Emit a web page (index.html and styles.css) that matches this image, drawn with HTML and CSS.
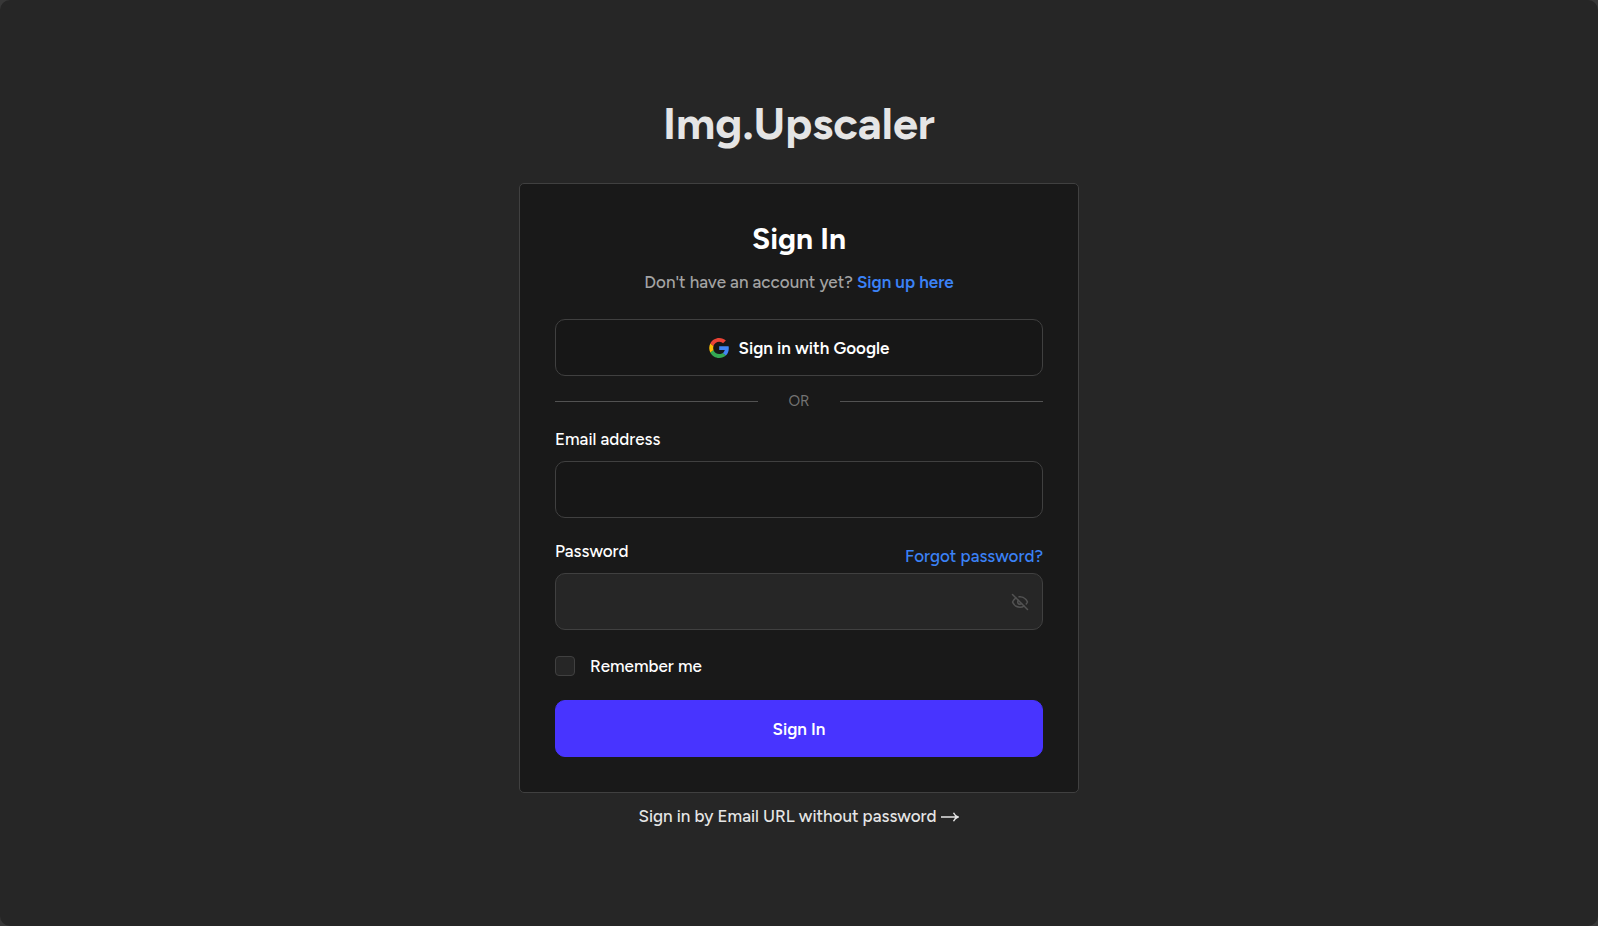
FILE: index.html
```html
<!DOCTYPE html>
<html lang="en">
<head>
<meta charset="utf-8">
<meta name="viewport" content="width=device-width, initial-scale=1">
<title>Img.Upscaler</title>
<link rel="stylesheet" href="styles.css">
</head>
<body>
<main class="page">
  <p class="brand">Img.Upscaler</p>
  <section class="card">
    <h1 class="heading">Sign In</h1>
    <p class="subtitle">Don't have an account yet? <a class="link strong" href="#">Sign up here</a></p>
    <button class="button google" type="button">
      <svg class="google-logo" viewBox="0 0 46 47" aria-hidden="true">
        <path d="M46 24.0287C46 22.09 45.8533 20.68 45.5013 19.2112H23.4694V27.9356H36.4069C36.1429 30.1094 34.7347 33.37 31.5957 35.5731L31.5663 35.8669L38.5191 41.2719L38.9885 41.3306C43.4477 37.2181 46 31.1669 46 24.0287Z" fill="#4285F4"/>
        <path d="M23.4694 47C29.8061 47 35.1161 44.9144 39.0179 41.3012L31.625 35.5437C29.6301 36.9244 26.9898 37.8937 23.4987 37.8937C17.2793 37.8937 12.0281 33.7812 10.1505 28.1412L9.88649 28.1706L2.61097 33.7812L2.52296 34.0456C6.36608 41.7125 14.287 47 23.4694 47Z" fill="#34A853"/>
        <path d="M10.1212 28.1413C9.62245 26.6725 9.32908 25.1156 9.32908 23.5C9.32908 21.8844 9.62245 20.3275 10.0918 18.8588V18.5356L2.75765 12.8369L2.52296 12.9544C0.909439 16.1269 0 19.7106 0 23.5C0 27.2894 0.909439 30.8731 2.49362 34.0456L10.1212 28.1413Z" fill="#FBBC05"/>
        <path d="M23.4694 9.07688C27.8699 9.07688 30.8622 10.9863 32.5344 12.5725L39.1645 6.11C35.0867 2.32063 29.8061 0 23.4694 0C14.287 0 6.36607 5.2875 2.49362 12.9544L10.0918 18.8588C11.9987 13.1894 17.25 9.07688 23.4694 9.07688Z" fill="#EB4335"/>
      </svg>
      Sign in with Google
    </button>
    <div class="divider">OR</div>
    <form class="form">
      <label class="label" for="email">Email address</label>
      <input class="input" id="email" type="email">
      <div class="label-row">
        <label for="password">Password</label>
        <a class="link forgot" href="#">Forgot password?</a>
      </div>
      <div class="password">
        <input class="input filled" id="password" type="password">
        <button class="toggle" type="button" aria-label="Show password">
          <svg class="eye" viewBox="0 0 24 24" fill="none" stroke="currentColor" stroke-width="2" stroke-linecap="round" stroke-linejoin="round" aria-hidden="true">
            <path d="M9.88 9.88a3 3 0 1 0 4.24 4.24"/>
            <path d="M10.73 5.08A10.43 10.43 0 0 1 12 5c7 0 10 7 10 7a13.16 13.16 0 0 1-1.67 2.68"/>
            <path d="M6.61 6.61A13.526 13.526 0 0 0 2 12s3 7 10 7a9.74 9.74 0 0 0 5.39-1.61"/>
            <path d="M2 2 22 22"/>
          </svg>
        </button>
      </div>
      <div class="remember">
        <input class="checkbox" id="remember" type="checkbox">
        <label for="remember">Remember me</label>
      </div>
      <button class="button submit" type="submit">Sign In</button>
    </form>
  </section>
  <a class="alternate" href="#">Sign in by Email URL without password
    <svg class="arrow" viewBox="0 0 18 12" fill="none" stroke="currentColor" stroke-width="1.4" aria-hidden="true"><path d="M0 7H17M12.5 2.8C13.5 5 15 6.3 17 7C15 7.7 13.5 9 12.5 11.2"/></svg>
  </a>
</main>
</body>
</html>
```

FILE: styles.css
```css
* {
  box-sizing: border-box;
}

html {
  background: #383838;
}

body {
  margin: 0;
  color: #fff;
  font: 500 17px/26px Figtree, Lato, sans-serif;
}

.page {
  display: flex;
  flex-direction: column;
  align-items: center;
  justify-content: center;
  min-height: 100vh;
  padding-bottom: 4px;
  border-radius: 10px;
  background: #262626;
}

.brand {
  margin: 0 0 30px;
  color: #e5e5e5;
  font-size: 45px;
  font-weight: 700;
  line-height: 60px;
}

.card {
  width: 100%;
  max-width: 560px;
  padding: 35px;
  border: 1px solid #404040;
  border-radius: 5px;
  background: #191919;
}

.heading {
  margin: 0;
  font-size: 30px;
  font-weight: 700;
  line-height: 40px;
  text-align: center;
}

.subtitle {
  margin: 10px 0 24px;
  color: #a3a3a3;
  text-align: center;
}

.link {
  color: #3b82f6;
  text-decoration: none;
}

.strong {
  font-weight: 600;
}

.button,
.input {
  display: block;
  width: 100%;
  height: 57px;
  border: 1px solid #404040;
  border-radius: 10px;
  background: #171717;
  color: #fff;
  font: inherit;
}

.button {
  display: flex;
  align-items: center;
  justify-content: center;
  gap: 10px;
  padding: 0 20px;
  font-weight: 600;
}

.google-logo {
  width: 20px;
  height: 20px;
}

.divider {
  display: flex;
  align-items: center;
  gap: 30px;
  margin: 15px 0;
  color: #737373;
  font-size: 15px;
  font-weight: 400;
  line-height: 20px;
}

.divider::before,
.divider::after {
  flex: 1;
  height: 1px;
  background: #525252;
  content: "";
}

.label {
  display: block;
  margin-bottom: 9px;
}

.label-row {
  display: flex;
  justify-content: space-between;
  margin: 20px 0 4px;
}

.forgot {
  padding-top: 5px;
}

.input {
  padding: 0 20px;
}

.filled {
  padding-right: 48px;
  background: #262626;
}

.password {
  position: relative;
}

.toggle {
  position: absolute;
  top: 0;
  right: 0;
  display: grid;
  place-items: center;
  width: 46px;
  height: 100%;
  padding: 0;
  border: 0;
  background: none;
  color: #525252;
}

.eye {
  width: 18px;
  height: 18px;
}

.remember {
  display: flex;
  align-items: center;
  gap: 15px;
  margin: 26px 0 24px;
  line-height: 20px;
}

.checkbox {
  width: 20px;
  height: 20px;
  margin: 0;
  border: 1px solid #404040;
  border-radius: 4px;
  background: #262626;
  appearance: none;
}

.checkbox:checked {
  background: #4834ff;
}

.submit {
  border-color: #4834ff;
  background: #4834ff;
}

.alternate {
  display: flex;
  align-items: center;
  gap: 5px;
  margin-top: 10px;
  color: #e5e5e5;
  text-decoration: none;
}

.arrow {
  width: 18px;
  height: 12px;
}
```
